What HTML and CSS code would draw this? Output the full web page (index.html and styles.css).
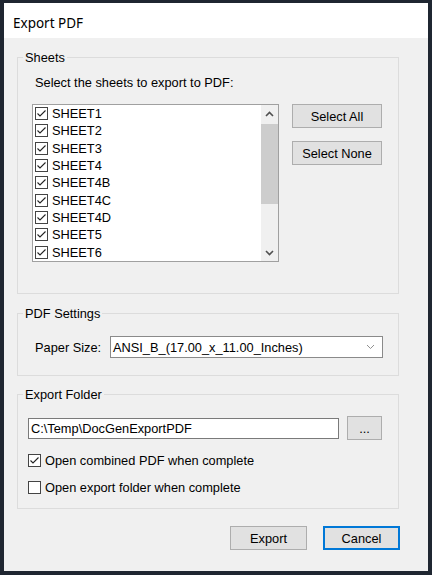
FILE: index.html
```html
<!DOCTYPE html>
<html>
<head>
  <meta charset="UTF-8">
  <title>Export PDF</title>
  <link rel="stylesheet" href="styles.css">
</head>
<body>
  <div class="window">
    <div class="titlebar">Export PDF</div>
    <div class="client">

      <!-- Sheets -->
      <div class="group sheets">
        <span class="group-title">Sheets</span>
        <div class="prompt">Select the sheets to export to PDF:</div>
        <div class="sheet-row">
          <div class="listbox">
            <ul class="items">
              <li><svg class="cb" viewBox="0 0 13 13"><rect x="0.5" y="0.5" width="12" height="12"/><path d="M2.5 6.5 L5 9 L10.5 3.5"/></svg>SHEET1</li>
              <li><svg class="cb" viewBox="0 0 13 13"><rect x="0.5" y="0.5" width="12" height="12"/><path d="M2.5 6.5 L5 9 L10.5 3.5"/></svg>SHEET2</li>
              <li><svg class="cb" viewBox="0 0 13 13"><rect x="0.5" y="0.5" width="12" height="12"/><path d="M2.5 6.5 L5 9 L10.5 3.5"/></svg>SHEET3</li>
              <li><svg class="cb" viewBox="0 0 13 13"><rect x="0.5" y="0.5" width="12" height="12"/><path d="M2.5 6.5 L5 9 L10.5 3.5"/></svg>SHEET4</li>
              <li><svg class="cb" viewBox="0 0 13 13"><rect x="0.5" y="0.5" width="12" height="12"/><path d="M2.5 6.5 L5 9 L10.5 3.5"/></svg>SHEET4B</li>
              <li><svg class="cb" viewBox="0 0 13 13"><rect x="0.5" y="0.5" width="12" height="12"/><path d="M2.5 6.5 L5 9 L10.5 3.5"/></svg>SHEET4C</li>
              <li><svg class="cb" viewBox="0 0 13 13"><rect x="0.5" y="0.5" width="12" height="12"/><path d="M2.5 6.5 L5 9 L10.5 3.5"/></svg>SHEET4D</li>
              <li><svg class="cb" viewBox="0 0 13 13"><rect x="0.5" y="0.5" width="12" height="12"/><path d="M2.5 6.5 L5 9 L10.5 3.5"/></svg>SHEET5</li>
              <li><svg class="cb" viewBox="0 0 13 13"><rect x="0.5" y="0.5" width="12" height="12"/><path d="M2.5 6.5 L5 9 L10.5 3.5"/></svg>SHEET6</li>
            </ul>
            <div class="scrollbar">
              <div class="sb-arrow"><svg viewBox="0 0 9 6"><path d="M1 5 L4.5 1.5 L8 5"/></svg></div>
              <div class="sb-track"><div class="sb-thumb"></div></div>
              <div class="sb-arrow"><svg viewBox="0 0 9 6"><path d="M1 1 L4.5 4.5 L8 1"/></svg></div>
            </div>
          </div>
          <div class="side-buttons">
            <button class="btn side">Select All</button>
            <button class="btn side">Select None</button>
          </div>
        </div>
      </div>

      <!-- PDF Settings -->
      <div class="group pdf">
        <span class="group-title">PDF Settings</span>
        <div class="paper-row">
          <span class="paper-label">Paper Size:</span>
          <div class="combo">
            <span>ANSI_B_(17.00_x_11.00_Inches)</span>
            <svg class="combo-arrow" viewBox="0 0 9 6"><path d="M1 1 L4.5 4.5 L8 1"/></svg>
          </div>
        </div>
      </div>

      <!-- Export Folder -->
      <div class="group folder">
        <span class="group-title">Export Folder</span>
        <div class="folder-row">
          <div class="textbox">C:\Temp\DocGenExportPDF</div>
          <button class="btn browse">...</button>
        </div>
        <div class="option first"><svg class="cb" viewBox="0 0 13 13"><rect x="0.5" y="0.5" width="12" height="12"/><path d="M2.5 6.5 L5 9 L10.5 3.5"/></svg>Open combined PDF when complete</div>
        <div class="option"><svg class="cb" viewBox="0 0 13 13"><rect x="0.5" y="0.5" width="12" height="12"/></svg>Open export folder when complete</div>
      </div>

      <div class="actions">
        <button class="btn action">Export</button>
        <button class="btn action default">Cancel</button>
      </div>
    </div>
  </div>
</body>
</html>
```

FILE: styles.css
```css
body {
	margin: 0;
	background: #1f2631;
	font: 12.8px "Liberation Sans", Arial, sans-serif;
	color: #000;
}

.window {
	margin: 3px 0 0 4px;
	width: 424px;
	height: 568px;
	display: flex;
	flex-direction: column;
	background: #f0f0f0;
}

/*title bar*/
.titlebar {
	height: 35px;
	box-sizing: border-box;
	padding: 5px 0 0 9px;
	display: flex;
	align-items: center;
	background: #fff;
	font: 13.5px "Noto Sans", sans-serif;
}

.client {
	flex: 1;
	padding: 19px 29px 0 13px;
	display: flex;
	flex-direction: column;
}

/*group boxes*/
.group {
	position: relative;
	border: 1px solid #dcdcdc;
}

.group-title {
	position: absolute;
	top: -8px;
	left: 5px;
	padding: 0 2px;
	line-height: 16px;
	background: #f0f0f0;
}

.sheets {
	height: 237px;
	box-sizing: border-box;
	padding: 17px 0 0 14px;
}

.prompt {
	line-height: 16px;
	padding-left: 3px;
}

.sheet-row {
	display: flex;
	margin-top: 13px;
}

/*list of sheets*/
.listbox {
	width: 247px;
	height: 158px;
	box-sizing: border-box;
	border: 1px solid #a0a0a0;
	background: #fff;
	display: flex;
}

.items {
	flex: 1;
	margin: 0;
	padding: 0;
	list-style: none;
}

.items li {
	height: 17.33px;
	display: flex;
	align-items: center;
	gap: 4px;
	padding-left: 2px;
}

.cb {
	width: 13px;
	height: 13px;
	flex: none;
}

.cb rect {
	fill: #fff;
	stroke: #444;
	stroke-width: 1;
}

.cb path {
	fill: none;
	stroke: #222;
	stroke-width: 1.1;
}

.scrollbar {
	width: 17px;
	display: flex;
	flex-direction: column;
	background: #f0f0f0;
}

.sb-arrow {
	height: 17px;
	display: flex;
	align-items: center;
	justify-content: center;
}

.sb-arrow svg {
	width: 9px;
	height: 6px;
}

.sb-arrow path,
.combo-arrow path {
	fill: none;
	stroke: #505050;
	stroke-width: 1.6;
}

.sb-track {
	flex: 1;
	padding-top: 2px;
}

.sb-thumb {
	height: 80px;
	background: #cdcdcd;
}

/*buttons*/
.btn {
	font: inherit;
	color: #000;
	background: #e1e1e1;
	border: 1px solid #adadad;
	padding: 0;
	box-sizing: border-box;
}

.side-buttons {
	display: flex;
	flex-direction: column;
	gap: 13px;
	margin-left: 13px;
}

.side {
	width: 90px;
	height: 24px;
}

/*pdf settings*/
.pdf {
	margin-top: 19px;
	height: 63px;
	box-sizing: border-box;
	padding: 22px 0 0 17px;
}

.paper-row {
	display: flex;
	align-items: center;
}

.paper-label {
	width: 75px;
}

.combo {
	width: 273px;
	height: 22px;
	box-sizing: border-box;
	border: 1px solid #8a8a8a;
	background: #fff;
	display: flex;
	align-items: center;
	justify-content: space-between;
	padding: 0 7px 0 2px;
}

.combo-arrow {
	width: 9px;
	height: 6px;
}

.combo-arrow path {
	stroke: #909090;
	stroke-width: 1;
}

/*export folder*/
.folder {
	margin-top: 18px;
	height: 115px;
	box-sizing: border-box;
	padding: 21px 0 0 10px;
}

.folder-row {
	display: flex;
	align-items: center;
	gap: 8px;
}

.textbox {
	width: 311px;
	height: 21px;
	box-sizing: border-box;
	border: 1px solid #7a7a7a;
	background: #fff;
	padding-left: 2px;
	line-height: 19px;
}

.browse {
	width: 35px;
	height: 24px;
}

.option {
	height: 18px;
	display: flex;
	align-items: center;
	gap: 4px;
	margin-top: 9px;
}

.option.first {
	margin-top: 11px;
}

/*dialog buttons*/
.actions {
	display: flex;
	justify-content: flex-end;
	gap: 16px;
	margin: 17px -1px 0 0;
}

.action {
	width: 77px;
	height: 24px;
}

.default {
	border-color: #0078d7;
	box-shadow: inset 0 0 0 1px #0078d7;
}
```
